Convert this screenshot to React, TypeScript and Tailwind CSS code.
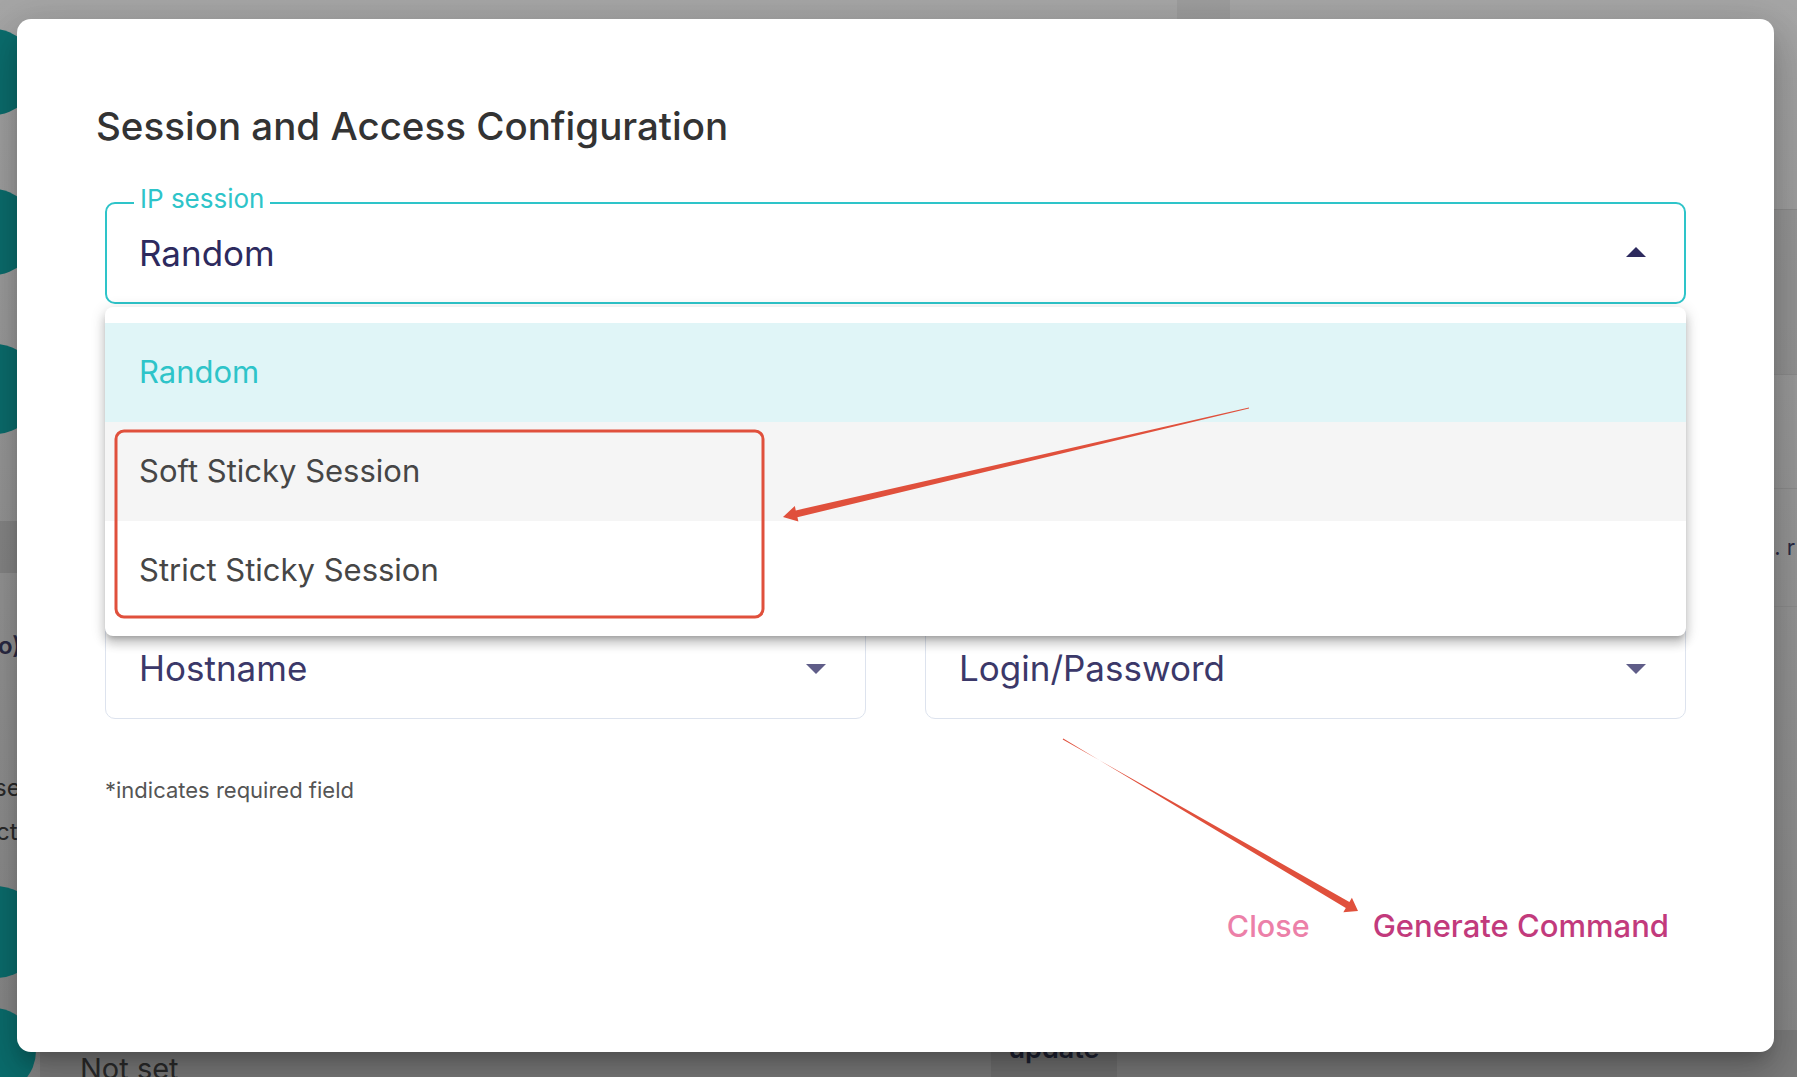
import React from 'react'

type CaretProps = { up?: boolean; className: string }

function Caret({ up, className }: CaretProps) {
  return (
    <svg viewBox="0 0 24 24" className={`h-[48px] w-[48px] shrink-0 ${className}`} fill="currentColor">
      <path d={up ? 'M7 14l5-5 5 5z' : 'M7 10l5 5 5-5z'} />
    </svg>
  )
}

const options = [
  { label: 'Random', className: 'bg-[#e0f5f7] text-[#2ec4c9]' },
  { label: 'Soft Sticky Session', className: 'bg-[#f5f5f5] text-[#464646]' },
  { label: 'Strict Sticky Session', className: 'bg-white text-[#464646]' },
]

function SelectField({ value }: { value: string }) {
  return (
    <div className="flex h-[102px] items-center justify-between rounded-[10px] border border-[#dde3ee] pl-[33px] pr-[25px]">
      <span className="text-[35px] text-[#3b3869]">{value}</span>
      <Caret className="text-[#5f5d88]" />
    </div>
  )
}

function Annotations() {
  return (
    <svg
      viewBox="0 0 1797 1077"
      className="pointer-events-none absolute inset-0 z-20 h-full w-full"
    >
      <rect x="116" y="431" width="647" height="186" rx="8" fill="none" stroke="#e0503c" strokeWidth="3" />
      <polygon
        fill="#e0503c"
        points="1249,407.5 795.8,510.4 794.8,506 783,517 798.4,521.6 797.4,517.2 1249,408.5"
      />
      <polygon
        fill="#e0503c"
        points="1062.7,739.4 1349.4,902 1351.9,897.7 1358,911 1343.3,912.3 1345.8,908 1063.3,738.6"
      />
    </svg>
  )
}

export default function App() {
  return (
    <div className="relative flex h-[1077px] w-[1797px] overflow-hidden bg-linear-to-b from-[#a6a6a6] to-[#888888] font-['Inter',sans-serif]">
      {/* page behind the dialog */}
      <div className="flex w-[40px] shrink-0 flex-col">
        <div className="-ml-[50px] mt-[29px] h-[86px] w-[86px] shrink-0 rounded-full bg-[#0b6e6e]" />
        <div className="-ml-[50px] mt-[74px] h-[86px] w-[86px] shrink-0 rounded-full bg-[#0b6e6e]" />
        <div className="-ml-[50px] mt-[69px] h-[90px] w-[90px] shrink-0 rounded-full bg-[#0b6e6e]" />
        <div className="mt-[87px] h-[52px] shrink-0 bg-black/10" />
        <div className="-ml-[2px] mt-[55px] text-[24px] font-semibold text-[#2a2a44]">o)</div>
        <div className="-ml-[6px] mt-[106px] text-[24px] text-[#2a2a2a]">se</div>
        <div className="-ml-[4px] mt-[8px] text-[24px] text-[#2a2a2a]">ct</div>
        <div className="-ml-[50px] mt-[36px] h-[92px] w-[92px] shrink-0 rounded-full bg-[#0b6e6e]" />
        <div className="-ml-[50px] mt-[30px] h-[86px] w-[86px] shrink-0 rounded-full bg-[#0b6e6e]" />
      </div>

      <div className="flex flex-1 flex-col">
        <div className="flex h-[210px] shrink-0 border-b border-[#8d8d8d]">
          <div className="ml-[1137px] w-[53px] bg-black/5" />
        </div>
        <div className="h-[165px] shrink-0 border-b border-[#8d8d8d] bg-black/5" />
        <div className="h-[114px] shrink-0 border-b border-[#8d8d8d]" />
        <div className="flex h-[118px] shrink-0 items-center justify-end border-b border-[#8d8d8d] pr-[2px] text-[22px] text-[#2a2a44]">
          . r
        </div>
        <div className="flex-1" />
        <div className="flex h-[47px] shrink-0 items-start bg-[#7c7c7c]">
          <div className="w-[951px] pl-[40px] pt-[24px] text-[29px] leading-[30px] text-[#2b2b2b]">Not set</div>
          <div className="h-[70px] w-[126px] rounded-[12px] bg-[#727272] pt-[4px] text-center text-[27px] font-semibold leading-[30px] text-[#1f2233]">
            update
          </div>
        </div>
      </div>

      {/* dialog */}
      <div className="absolute left-[17px] top-[19px] z-10 flex h-[1033px] w-[1757px] flex-col rounded-[14px] bg-white shadow-[0_11px_15px_-7px_rgba(0,0,0,0.2),0_24px_38px_3px_rgba(0,0,0,0.14),0_9px_46px_8px_rgba(0,0,0,0.12)]">
        <h2 className="pl-[79px] pt-[83px] text-[38.5px] font-medium leading-[48px] text-[#333333]">
          Session and Access Configuration
        </h2>

        <div className="mt-[52px] flex flex-col px-[88px]">
          <div className="relative z-10 flex h-[102px] items-center justify-between rounded-[10px] border-2 border-[#2ec4c9] pl-[32px] pr-[24px]">
            <span className="absolute left-[27px] top-[-20px] h-[30px] bg-white px-[6px] text-[26px] leading-[30px] text-[#2ec4c9]">
              IP session
            </span>
            <span className="text-[35px] text-[#2d2a5e]">Random</span>
            <Caret up className="text-[#2d2a5e]" />

            <ul className="absolute left-[-2px] right-[-2px] top-[calc(100%+5px)] rounded-[8px] bg-white py-[16px] shadow-[0_5px_5px_-3px_rgba(0,0,0,0.2),0_8px_10px_1px_rgba(0,0,0,0.14),0_3px_14px_2px_rgba(0,0,0,0.12)]">
              {options.map((o) => (
                <li key={o.label} className={`flex h-[99px] items-center pl-[34px] text-[31px] ${o.className}`}>
                  {o.label}
                </li>
              ))}
            </ul>
          </div>

          <div className="mt-[313px] grid grid-cols-2 gap-[59px]">
            <SelectField value="Hostname" />
            <SelectField value="Login/Password" />
          </div>

          <p className="mt-[56px] text-[22px] leading-[30px] text-[#555555]">*indicates required field</p>

          <div className="mt-[99px] flex justify-end gap-[29px]">
            <button className="px-[17px] text-[30.5px] font-medium leading-[44px] text-[#ec80a8]">Close</button>
            <button className="px-[17px] text-[31px] font-medium leading-[44px] text-[#c23a7c]">Generate Command</button>
          </div>
        </div>
      </div>

      <Annotations />
    </div>
  )
}
